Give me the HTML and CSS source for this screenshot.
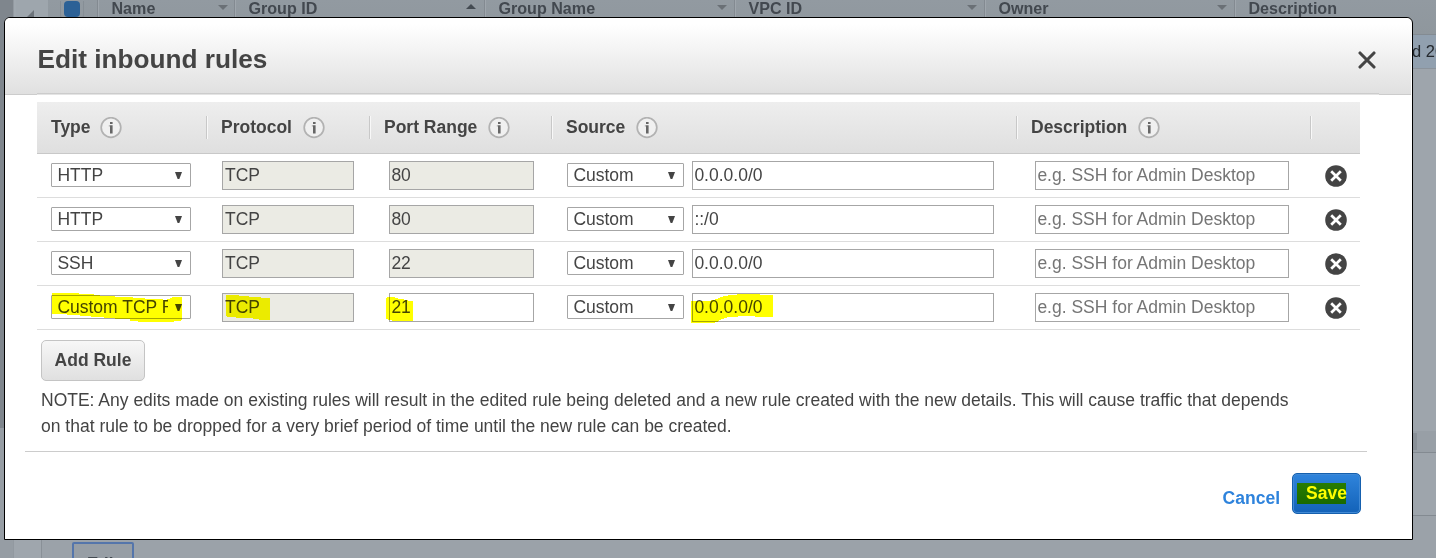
FILE: index.html
```html
<!DOCTYPE html>
<html lang="en">
<head>
<meta charset="utf-8">
<title>Edit inbound rules</title>
<link rel="stylesheet" href="styles.css">
</head>
<body>
<svg class="defs" width="0" height="0">
  <symbol id="info" viewBox="0 0 22 22">
    <circle cx="11" cy="10.5" r="9.8" fill="#f0f0f0" stroke="#b2b2b2" stroke-width="1.7"/>
    <path d="M10 5h2.6v2H10zM10 8.2h2.6v8.3H10z" fill="#666"/>
    <path d="M8.8 8.2H10v1.2H8.8z" fill="#aaa"/>
  </symbol>
  <symbol id="remove" viewBox="0 0 22 22">
    <circle cx="11" cy="11" r="10.8" fill="#444"/>
    <path d="M6.2 6.2l9.6 9.6M15.8 6.2l-9.6 9.6" stroke="#fff" stroke-width="2.7" stroke-linecap="butt"/>
  </symbol>
</svg>
<div class="console">
  <div class="rail"><div class="rail-top"></div></div>
  <div class="workspace">
    <div class="cols">
      <div class="col-toggle"><svg width="8" height="8" viewBox="0 0 8 8"><path d="M8 0v8H0z" fill="#6c737a"/></svg></div>
      <div class="col-check"><i></i></div>
      <div class="col name">Name<svg width="10" height="5"><path d="M0 0h10L5 5z" fill="#6a7076"/></svg></div>
      <div class="col">Group ID<svg class="up" width="10" height="5"><path d="M0 5h10L5 0z" fill="#444b52"/></svg></div>
      <div class="col">Group Name<svg width="10" height="5"><path d="M0 0h10L5 5z" fill="#6a7076"/></svg></div>
      <div class="col">VPC ID<svg width="10" height="5"><path d="M0 0h10L5 5z" fill="#6a7076"/></svg></div>
      <div class="col">Owner<svg width="10" height="5"><path d="M0 0h10L5 5z" fill="#6a7076"/></svg></div>
      <div class="col">Description</div>
    </div>
    <div class="record">d 20</div>
    <div class="space"></div>
    <div class="scroll"><div class="thumb"></div></div>
    <div class="tabs"></div>
    <div class="detail"><div class="gutter"></div><div class="panel"><div class="edit">Edit</div></div></div>
  </div>
</div>

<div class="modal">
  <div class="modal-head">
    <div class="head-inner">
      <h1>Edit inbound rules</h1>
      <svg class="close" width="18" height="18" viewBox="0 0 18 18"><path d="M2 2l14 14M16 2L2 16" stroke="#444" stroke-width="3.1" stroke-linecap="round"/></svg>
    </div>
  </div>
  <div class="rules">
    <div class="row head">
      <div class="th first">Type<svg class="info"><use href="#info"/></svg></div>
      <div class="th">Protocol<svg class="info"><use href="#info"/></svg></div>
      <div class="th">Port Range<svg class="info"><use href="#info"/></svg></div>
      <div class="th">Source<svg class="info"><use href="#info"/></svg></div>
      <div class="th">Description<svg class="info"><use href="#info"/></svg></div>
      <div></div>
    </div>
    <div class="row">
      <div class="td type"><div class="select"><span>HTTP</span><b></b></div></div>
      <div class="td proto"><div class="input off">TCP</div></div>
      <div class="td port"><div class="input off">80</div></div>
      <div class="td source"><div class="select"><span>Custom</span><b></b></div><div class="input">0.0.0.0/0</div></div>
      <div class="td desc"><div class="input hint">e.g. SSH for Admin Desktop</div></div>
      <div class="td del"><svg><use href="#remove"/></svg></div>
    </div>
    <div class="row">
      <div class="td type"><div class="select"><span>HTTP</span><b></b></div></div>
      <div class="td proto"><div class="input off">TCP</div></div>
      <div class="td port"><div class="input off">80</div></div>
      <div class="td source"><div class="select"><span>Custom</span><b></b></div><div class="input">::/0</div></div>
      <div class="td desc"><div class="input hint">e.g. SSH for Admin Desktop</div></div>
      <div class="td del"><svg><use href="#remove"/></svg></div>
    </div>
    <div class="row">
      <div class="td type"><div class="select"><span>SSH</span><b></b></div></div>
      <div class="td proto"><div class="input off">TCP</div></div>
      <div class="td port"><div class="input off">22</div></div>
      <div class="td source"><div class="select"><span>Custom</span><b></b></div><div class="input">0.0.0.0/0</div></div>
      <div class="td desc"><div class="input hint">e.g. SSH for Admin Desktop</div></div>
      <div class="td del"><svg><use href="#remove"/></svg></div>
    </div>
    <div class="row">
      <div class="td type"><div class="select"><span>Custom TCP Rule</span><b></b></div></div>
      <div class="td proto"><div class="input off">TCP</div></div>
      <div class="td port"><div class="input">21</div></div>
      <div class="td source"><div class="select"><span>Custom</span><b></b></div><div class="input">0.0.0.0/0</div></div>
      <div class="td desc"><div class="input hint">e.g. SSH for Admin Desktop</div></div>
      <div class="td del"><svg><use href="#remove"/></svg></div>
    </div>
  </div>
  <div class="add">Add Rule</div>
  <p class="note">NOTE: Any edits made on existing rules will result in the edited rule being deleted and a new rule created with the new details. This will cause traffic that depends<br>on that rule to be dropped for a very brief period of time until the new rule can be created.</p>
  <div class="foot">
    <div class="cancel">Cancel</div>
    <div class="save">Save</div>
  </div>
</div>

<svg class="marker" width="1436" height="558" viewBox="0 0 1436 558">
  <path d="M52 293H79V294H94V295H100V296H115V297H133V298H145V299H160L166 300L171 298H172V297H182V320H181V321H174V322H138V321H130V319H115V318H104V317H91V316H80V315H67V314H52Z"/>
  <path d="M226 295H239V296H249V297H261V298H270V319L269 320H259V319H254L251 318H236V317H228L226 316Z"/>
  <path d="M386 298L388 297H395V298H398V299H403L404 300H408V301H413V321H392V320H389L386 319Z"/>
  <path d="M691 301H709L717 299L721 297L730 295H737V294H760V295H773V317H755V316H738V317H729L722 319L717 322L713 323H691Z"/>
  <path d="M1297 483H1346V504H1297Z"/>
</svg>
</body>
</html>
```
FILE: styles.css
```css
* { box-sizing: border-box; }
body {
  margin: 0;
  width: 1436px;
  height: 558px;
  overflow: hidden;
  position: relative;
  background: #9ea5ac;
  color: #444;
  font-family: "Liberation Sans", Arial, sans-serif;
  font-size: 17.5px;
}
.defs { position: absolute; }

/* dimmed console behind the dialog */
.console { display: flex; height: 558px; }
.rail { width: 14px; background: #969da4; border-right: 1px solid #9299a0; }
.rail-top { height: 428px; background: #7f868d; }
.workspace { flex: 1; min-width: 0; display: flex; flex-direction: column; overflow: hidden; }
.cols {
  flex: none;
  display: flex;
  height: 35px;
  background: linear-gradient(#929aa1, #8f979d);
  border-bottom: 1px solid #838b92;
  font-size: 16.1px;
  font-weight: bold;
  line-height: 16px;
  color: #42484f;
}
.col-toggle { width: 34px; padding: 10px 0 0 10px; background: #9ea6ad; border-left: 2px solid #a0a8af; }
.col-toggle svg { display: block; }
.col-check { width: 49px; padding-left: 12px; }
.col-check i { display: block; width: 24px; height: 18px; border: 1px solid #868e95; border-top: 0; border-radius: 0 0 4px 4px; }
.col-check i::before { content: ""; display: block; width: 16px; height: 16px; margin: 1px 0 0 3px; background: #2c6196; border-radius: 4px; }
.col {
  width: 250px;
  display: flex;
  justify-content: space-between;
  padding: 0 7px 0 13.5px;
  border-left: 1px solid #838a91;
  box-shadow: inset 1px 0 #9fa6ad;
}
.col.name { width: 137px; padding-right: 6px; }
.col svg { margin-top: 5px; }
.col svg.up { margin: 4px 1px 0 0; }
.col:last-child { width: 202px; }
.record {
  flex: none;
  height: 34px;
  padding-left: 1398px;
  overflow: hidden;
  white-space: nowrap;
  line-height: 33px;
  font-size: 16.5px;
  color: #23282d;
  background: #91a0af;
  border-bottom: 1px solid #8b939b;
}
.space { height: 362px; flex: none; }
.scroll { flex: none; height: 22px; padding: 2px 0 3px; background: #989fa6; border-bottom: 1px solid #838a91; }
.thumb { width: 1403px; height: 17px; background: #899097; }
.tabs { flex: none; height: 63px; border-bottom: 1px solid #838a91; }
.detail { flex: 1; display: flex; background: #9ba2a9; }
.gutter { width: 28px; background: #9fa6ad; border-right: 1px solid #899097; }
.panel { padding: 26px 0 0 30px; }
.edit {
  width: 62px;
  height: 40px;
  border: 2px solid #5475ab;
  border-radius: 2px;
  background: #979ea5;
  color: #444b52;
  font-weight: bold;
  font-size: 17px;
  line-height: 19px;
  padding-top: 10px;
  text-align: center;
}

/* dialog */
.modal {
  position: absolute;
  left: 4px;
  top: 17px;
  width: 1409px;
  height: 523px;
  background: #fff;
  border: 1px solid #000;
  border-radius: 6px 6px 0 0;
}
.modal-head {
  height: 77px;
  margin-right: 1px;
  padding: 0 32px;
  border-bottom: 1px solid #ccc;
  border-radius: 5px 5px 0 0;
  background: linear-gradient(#fff 8%, #e0e0e0);
}
.head-inner {
  height: 77px;
  display: flex;
  justify-content: space-between;
  border-bottom: 1px solid #e4e4e4;
  box-shadow: inset 0 -1px #ccc;
}
h1 { margin: 26px 0 0 0.5px; font-size: 26.2px; line-height: 30px; }
.close { margin: 33px 3px 0 0; }
.rules { width: 1323px; margin: 7px 0 0 32px; }
.row {
  display: grid;
  grid-template-columns: 170px 163px 182px 465px 294px 49px;
  height: 44px;
  border-bottom: 1px solid #ddd;
}
.row.head {
  height: 52px;
  background: linear-gradient(#eee, #dfdfdf);
  border-bottom-color: #c8c8c8;
}
.th {
  display: flex;
  height: 23px;
  margin: 14px -1px 0 0;
  padding-left: 14px;
  font-weight: bold;
  line-height: 22px;
  border-right: 1px solid #f8f8f8;
  box-shadow: inset -1px 0 #c8c8c8;
}
.info { width: 22px; height: 22px; margin: 1px 0 0 11px; }
.first .info { margin-left: 9px; }
.td { display: flex; padding-top: 7px; }
.type { padding-left: 14px; }
.proto { padding-left: 15px; }
.port { padding-left: 19px; }
.source { padding-left: 15px; gap: 8px; }
.desc { padding-left: 18px; }
.del { padding: 11px 0 0 14px; }
.del svg { width: 22px; height: 22px; }
.select {
  display: flex;
  justify-content: space-between;
  width: 140px;
  height: 24px;
  margin-top: 2px;
  padding: 0 8px 0 5.4px;
  border: 1px solid #a6a6a6;
  border-radius: 1px;
  background: #fff;
  line-height: 22px;
}
.select span { overflow: hidden; white-space: nowrap; width: 111px; }
.source .select { width: 117px; }
.source .select span { width: 80px; }
.select b {
  width: 7px;
  height: 7px;
  margin-top: 8px;
  background: #444;
  clip-path: polygon(0 0, 100% 0, 62% 100%, 38% 100%);
}
.input {
  height: 29px;
  padding-left: 1.4px;
  border: 1px solid #a6a6a6;
  background: #fff;
  line-height: 26px;
}
.off { background: #ebebe4; }
.hint { color: #757575; }
.proto .input { width: 132px; padding-left: 2px; }
.port .input { width: 145px; }
.source .input { width: 302px; }
.desc .input { width: 254px; }
.add {
  width: 104px;
  height: 41px;
  margin: 10px 0 0 36px;
  border: 1px solid #c4c4c4;
  border-radius: 5px;
  background: linear-gradient(#f7f7f7, #e0e0e0);
  font-weight: bold;
  line-height: 38px;
  text-align: center;
}
.note { margin: 6px 0 0 36px; line-height: 26px; white-space: nowrap; }
.foot {
  display: flex;
  justify-content: flex-end;
  width: 1342px;
  margin: 12px 0 0 20px;
  padding: 21px 6px 0 0;
  border-top: 1px solid #ccc;
  font-weight: bold;
}
.cancel { margin: 14px 12px 0 0; line-height: 22px; color: #2e83dc; }
.save {
  width: 69px;
  height: 41px;
  border: 1px solid #1560ae;
  border-radius: 5px;
  background: linear-gradient(#2f84dc, #1362b8);
  box-shadow: inset 0 0 0 1px #4089d5;
  color: #fff;
  line-height: 38px;
  text-align: center;
}

/* highlighter strokes over the fields */
.marker { position: absolute; left: 0; top: 0; mix-blend-mode: multiply; fill: #ff0; shape-rendering: crispEdges; }
```
